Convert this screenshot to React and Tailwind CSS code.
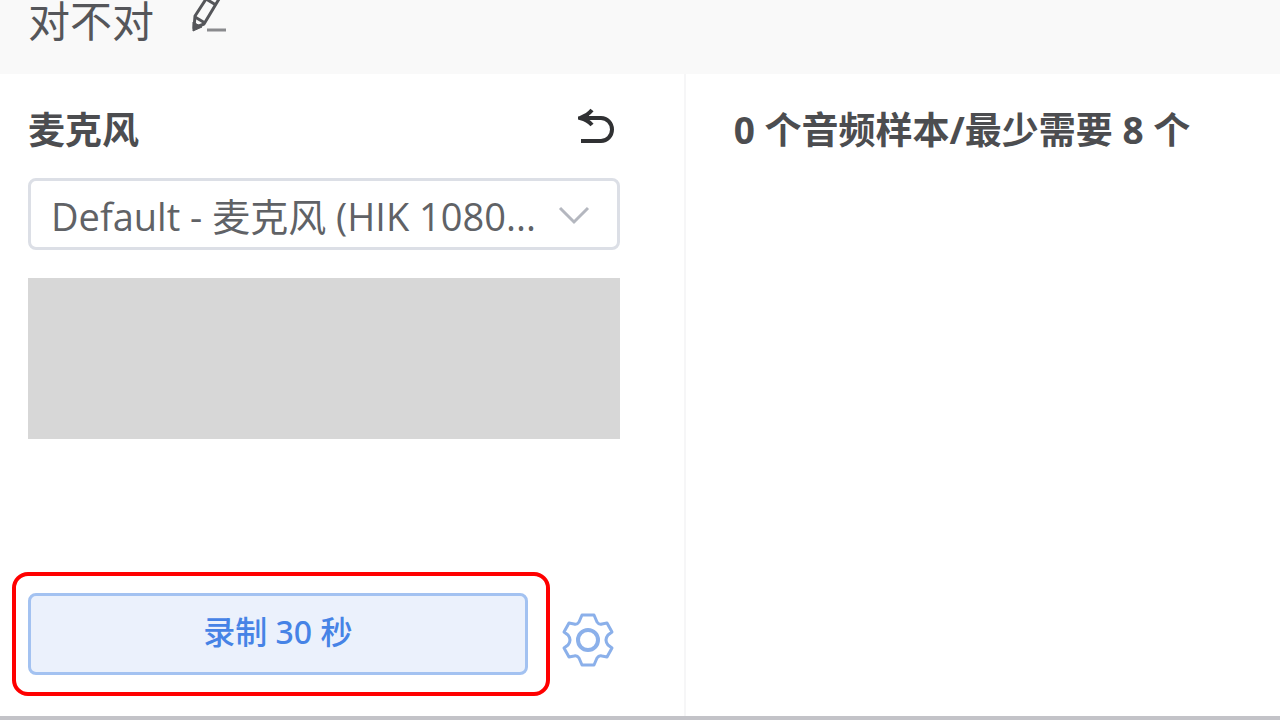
import { useState } from 'react';

const DEVICES = [{ id: 'default', label: 'Default - 麦克风 (HIK 1080...' }];

const RECORD_SECONDS = 30;
const MIN_SAMPLES = 8;

function EditIcon() {
  return (
    <svg width="38" height="36" viewBox="0 0 38 36" fill="none" stroke="#55565a" aria-hidden="true">
      <path d="M18 -4 5 16 4 28 14 24 29 -1" strokeWidth="3" strokeLinejoin="round" />
      <path d="M5 17 15 23M16 -1 26 5" strokeWidth="3" />
      <path d="M3 22 12 27 3 31Z" fill="#55565a" strokeWidth="1" />
      <path d="M17 30H36" stroke="#8a8b8e" strokeWidth="3" />
    </svg>
  );
}

function UndoIcon() {
  return (
    <svg width="38" height="38" viewBox="0 0 38 38" fill="none" stroke="#303133" aria-hidden="true">
      <path d="M3 10H23A11 11.5 0 0 1 23 33H3" strokeWidth="4" />
      <path d="M14 2Q10 7 2 10Q10 12 14 17" strokeWidth="4" />
      <path d="M0 10 11 5V15Z" fill="#303133" stroke="none" />
    </svg>
  );
}

function ChevronIcon() {
  return (
    <svg
      className="pointer-events-none absolute right-7 top-7"
      width="34"
      height="22"
      viewBox="0 0 34 22"
      fill="none"
      stroke="#b4b7bf"
      strokeWidth="3"
      aria-hidden="true"
    >
      <path d="M2 2 16 16 30 2" />
    </svg>
  );
}

function GearIcon() {
  return (
    <svg
      width="54"
      height="54"
      viewBox="-26 -27 54 54"
      fill="none"
      stroke="#8bb0ea"
      strokeWidth="3"
      strokeLinejoin="round"
      aria-hidden="true"
    >
      <path d="M-6 -25H6L9 -18Q11 -15 14 -16L19 -17 24 -8 20 -5Q16 0 20 5L24 8 19 17 14 16Q11 15 9 18L6 25H-6L-9 18Q-11 15 -14 16L-19 17 -24 8 -20 5Q-16 0 -20 -5L-24 -8 -19 -17 -14 -16Q-11 -15 -9 -18Z" />
      <circle r="10" strokeWidth="4" />
    </svg>
  );
}

export default function App() {
  const [device, setDevice] = useState(DEVICES[0].id);
  const [samples, setSamples] = useState([]);

  function handleRecord() {
    setSamples((current) => [...current, { seconds: RECORD_SECONDS }]);
  }

  return (
    <div className="flex min-h-screen flex-col border-b-4 border-[#c3c3c8] bg-white font-['Open_Sans','Noto_Sans_CJK_SC',sans-serif] text-[#4c4d50]">
      <header className="flex items-start gap-9 bg-[#f9f9f9] px-7 pb-8">
        <h1 className="text-[42px] leading-[42px] text-[#55565a]">对不对</h1>
        <button type="button" aria-label="编辑名称">
          <EditIcon />
        </button>
      </header>

      <main className="grid flex-1 grid-cols-[15fr_13fr]">
        <section className="flex flex-col border-r-2 border-[#f6f6f7] pb-5 pl-7 pr-16 pt-8">
          <div className="flex items-start justify-between">
            <label htmlFor="device" className="text-[37px] font-bold leading-[48px]">
              麦克风
            </label>
            <button type="button" aria-label="重置" className="mr-1 mt-0.5">
              <UndoIcon />
            </button>
          </div>

          <div className="relative mt-6">
            <select
              id="device"
              value={device}
              onChange={(event) => setDevice(event.target.value)}
              className="h-[72px] w-full appearance-none rounded-lg border-[3px] border-[#dcdfe6] bg-white pl-5 pr-16 pt-1 text-[38px] leading-[48px] text-[#606266]"
            >
              {DEVICES.map((item) => (
                <option key={item.id} value={item.id}>
                  {item.label}
                </option>
              ))}
            </select>
            <ChevronIcon />
          </div>

          <div className="mt-7 h-[161px] bg-[#d7d7d7]" />

          <div className="-ml-4 mt-auto flex items-center gap-3">
            <div className="flex-1 rounded-2xl border-4 border-[#ff0000] py-[17px] pl-3 pr-[18px]">
              <button
                type="button"
                onClick={handleRecord}
                className="h-[82px] w-full rounded-lg border-[3px] border-[#a3c2f1] bg-[#ebf1fc] pb-1 font-['Noto_Sans','Noto_Sans_CJK_SC',sans-serif] text-[32px] font-medium leading-[40px] text-[#4683e6]"
              >
                录制 {RECORD_SECONDS} 秒
              </button>
            </div>
            <button type="button" aria-label="录制设置" className="mr-1 mt-3">
              <GearIcon />
            </button>
          </div>
        </section>

        <section className="pl-12 pt-8">
          <h2 className="text-[37px] font-bold leading-[48px]">
            {samples.length} 个音频样本/最少需要 {MIN_SAMPLES} 个
          </h2>
        </section>
      </main>
    </div>
  );
}
